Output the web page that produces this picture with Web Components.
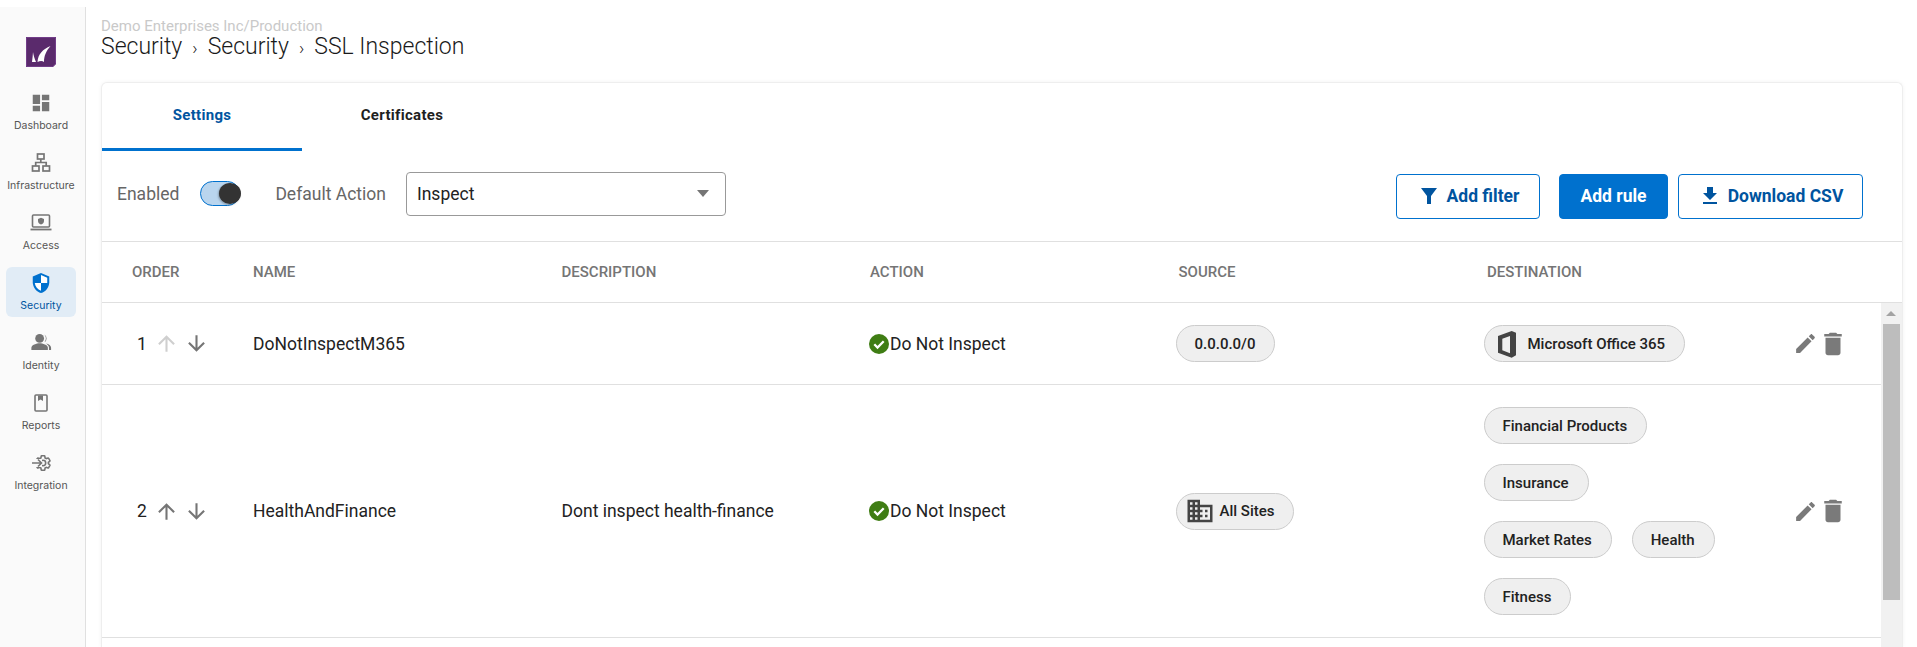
<!DOCTYPE html>
<html>
<head>
<meta charset="utf-8">
<title>SSL Inspection</title>
<style>
  html, body { margin: 0; height: 647px; overflow: hidden; background: #fff; }
  body { font-family: Roboto, "Liberation Sans", sans-serif; color: #222; }
  #app { display: flex; height: 647px; }
  svg { display: block; }
</style>
</head>
<body>
<div id="app">
  <side-nav>
    <nav-item label="Dashboard">
      <svg width="22" height="22" viewBox="0 0 24 24" fill="#757575"><path d="M3 13h8V3H3v10zm0 8h8v-6H3v6zm10 0h8V11h-8v10zm0-18v6h8V3h-8z"/></svg>
    </nav-item>
    <nav-item label="Infrastructure">
      <svg width="22" height="22" viewBox="0 0 22 22" fill="none" stroke="#757575" stroke-width="1.7"><rect x="7.500" y="2" width="6.500" height="5"/><rect x="2.500" y="14" width="6.500" height="5"/><rect x="13" y="14" width="6.500" height="5"/><path d="M10.800 7v3.500M5.700 14v-3.500h10.500V14"/></svg>
    </nav-item>
    <nav-item label="Access">
      <svg width="24" height="22" viewBox="0 0 24 22" fill="none"><rect x="3.500" y="3" width="17" height="12" rx="1" stroke="#757575" stroke-width="1.600"/><path d="M1.500 17.500h21" stroke="#757575" stroke-width="1.800"/><path d="M12 5.800l3 1.100v2.200c0 1.700-1.300 2.900-3 3.400-1.700-.5-3-1.700-3-3.400V6.900z" fill="#757575"/></svg>
    </nav-item>
    <nav-item label="Security" active>
      <svg width="22" height="22" viewBox="0 0 24 24"><path d="M12 1L3 4.800v6.400c0 5.400 3.800 10.400 9 11.800 5.200-1.400 9-6.400 9-11.800V4.800z" fill="#0071ce"/><path d="M12 3.400V12h6.800V6.200zM12 12H5.200c.5 3.900 3.100 7.300 6.800 8.500z" fill="#fff"/></svg>
    </nav-item>
    <nav-item label="Identity">
      <svg width="22" height="22" viewBox="0 0 24 24" fill="#757575"><circle cx="10.500" cy="7" r="4.800"/><path d="M1.500 19.500v-2.200c0-3.300 5.800-5 9-5s9 1.700 9 5v2.200z"/><path d="M15.800 2.800a5 5 0 0 1 0 8.400 7 7 0 0 0 0-8.400zM17.500 12.600c3 .5 5.500 2.200 5.500 4.700v2.200h-2.300v-2.200c0-1.900-1.200-3.500-3.200-4.700z"/></svg>
    </nav-item>
    <nav-item label="Reports">
      <svg width="22" height="22" viewBox="0 0 22 22" fill="none"><rect x="5" y="3" width="12" height="16" rx="1" stroke="#757575" stroke-width="1.600"/><path d="M8 3.500h5V9l-2.500-1.500L8 9z" fill="#757575"/></svg>
    </nav-item>
    <nav-item label="Integration">
      <svg width="26" height="22" viewBox="0 0 26 22" fill="none" stroke="#757575">
        <path transform="translate(6 2) scale(.75)" stroke-width="2.100" d="M19.140 12.940c.04-.3.06-.61.06-.94 0-.32-.02-.64-.07-.94l2.030-1.580c.18-.14.23-.41.12-.61l-1.920-3.320c-.12-.22-.37-.29-.59-.22l-2.390.96c-.5-.38-1.030-.7-1.620-.94l-.36-2.540c-.04-.24-.24-.41-.48-.41h-3.840c-.24 0-.43.17-.47.41l-.36 2.540c-.59.24-1.130.57-1.620.94l-2.390-.96c-.22-.08-.47 0-.59.22L2.740 8.870c-.12.21-.08.47.12.61l2.030 1.580c-.05.3-.09.63-.09.94s.02.64.07.94l-2.030 1.580c-.18.14-.23.41-.12.61l1.920 3.320c.12.22.37.29.59.22l2.390-.96c.5.38 1.030.7 1.620.94l.36 2.540c.05.24.24.41.48.41h3.840c.24 0 .44-.17.47-.41l.36-2.540c.59-.24 1.130-.56 1.620-.94l2.390.96c.22.08.47 0 .59-.22l1.920-3.320c.12-.22.07-.47-.12-.61l-2.010-1.580zM12 15.600c-1.980 0-3.600-1.620-3.600-3.600s1.620-3.600 3.600-3.600 3.600 1.620 3.600 3.600-1.620 3.600-3.600 3.600z"/>
        <rect x="5" y="7" width="9" height="8" fill="#fafafa" stroke="none"/>
        <path stroke-width="1.600" d="M4 11h9.500M10 7.500l3.500 3.500-3.500 3.500"/>
      </svg>
    </nav-item>
  </side-nav>

  <main-area>
    <page-title org="Demo Enterprises Inc/Production">
      <span>Security</span><span>Security</span><span>SSL Inspection</span>
    </page-title>
    <content-card>
      <tab-bar></tab-bar>
      <rules-toolbar></rules-toolbar>
      <rules-table>
        <rule-row order="1" name="DoNotInspectM365" action="Do Not Inspect" first>
          <tag-chip slot="source">0.0.0.0/0</tag-chip>
          <chip-line slot="destination"><tag-chip kind="office">Microsoft Office 365</tag-chip></chip-line>
        </rule-row>
        <rule-row order="2" name="HealthAndFinance" description="Dont inspect health-finance" action="Do Not Inspect">
          <tag-chip slot="source" kind="sites">All Sites</tag-chip>
          <chip-line slot="destination"><tag-chip>Financial Products</tag-chip></chip-line>
          <chip-line slot="destination"><tag-chip>Insurance</tag-chip></chip-line>
          <chip-line slot="destination"><tag-chip>Market Rates</tag-chip><tag-chip>Health</tag-chip></chip-line>
          <chip-line slot="destination"><tag-chip>Fitness</tag-chip></chip-line>
        </rule-row>
      </rules-table>
    </content-card>
  </main-area>
</div>

<script>
  function define(name, css, html, setup) {
    customElements.define(
      name,
      class extends HTMLElement {
        connectedCallback() {
          if (this.shadowRoot) return;
          this.attachShadow({ mode: "open" });
          this.shadowRoot.innerHTML = `<style>svg{display:block}${css}</style>${
            typeof html === "function" ? html(this) : html
          }`;
          if (setup) setup(this);
        }
      }
    );
  }

  define(
    "side-nav",
    `:host { display: flex; flex-direction: column; align-items: flex-start; box-sizing: border-box;
        width: 86px; flex: none; height: 640px; margin-top: 7px; padding-left: 6px; background: #fafafa;
        border-right: 1px solid #e0e0e0; }
     .logo { margin: 30px 0 20px 20px; width: 30px; height: 30px; }`,
    `<svg class="logo" viewBox="0 0 30 30">
       <path d="M0 0h30v27l-3 3H0z" fill="#5a2a6c"/>
       <path d="M.5.500h29v26.300l-2.700 2.700H.5z" fill="none" stroke="#713c88"/>
       <path d="M24.500 9C17 12 12 17 11.500 25c2.500-1.500 5-1.500 6.500 0 0-6 2-11 6.500-16zM7 15c-.2 3-.5 6.500-1 10h4C8.500 22 7.500 18 7 15z" fill="#fff"/>
     </svg><slot></slot>`
  );

  define(
    "nav-item",
    `:host { display: flex; flex-direction: column; align-items: center; box-sizing: border-box;
        width: 70px; height: 50px; margin-bottom: 10px; padding-top: 5px; border-radius: 6px;
        font: 10.5px Inter, Roboto, sans-serif; color: #555; }
     :host([active]) { background: #e1ecf6; color: #00549f; }
     .icon { height: 22px; display: flex; align-items: center; justify-content: center; }
     .label { margin-top: 5px; line-height: 14px; white-space: nowrap; }`,
    (el) => `<div class="icon"><slot></slot></div><div class="label">${el.getAttribute("label")}</div>`
  );

  define(
    "main-area",
    `:host { display: flex; flex-direction: column; flex: 1; min-width: 0; min-height: 0; box-sizing: border-box;
        padding: 18px 14px 0 15px; }`,
    `<slot></slot>`
  );

  define(
    "page-title",
    `:host { display: block; margin-bottom: 21px; }
     .org { font-size: 15px; line-height: 16px; color: #c9c9c9; }
     .crumbs { display: flex; font-size: 23px; font-weight: 300; line-height: 26px; color: #1a1a1a; }
     ::slotted(span:not(:last-child))::after { content: "\\203A"; margin: 0 10px; font-size: 18px; }`,
    (el) => `<div class="org">${el.getAttribute("org")}</div><div class="crumbs"><slot></slot></div>`
  );

  define(
    "content-card",
    `:host { display: block; flex: 1; min-height: 0; overflow: hidden; border: 1px solid #eee; border-bottom: 0;
        border-radius: 6px 6px 0 0; box-shadow: 0 0 4px rgba(0,0,0,.05); background: #fff; }`,
    `<slot></slot>`
  );

  define(
    "tab-bar",
    `:host { display: flex; height: 68px; }
     .tab { box-sizing: border-box; width: 200px; padding-top: 23px; text-align: center;
        font-size: 15px; font-weight: 700; line-height: 18px; letter-spacing: .3px; color: #1f1f1f; }
     .on { color: #00549f; border-bottom: 3px solid #0071ce; }`,
    `<div class="tab on">Settings</div><div class="tab">Certificates</div>`
  );

  define(
    "switch-toggle",
    `:host { display: block; position: relative; box-sizing: border-box; width: 40px; height: 25px;
        border: 1.5px solid #0071ce; border-radius: 13px; background: #b9d5ee; }
     .knob { position: absolute; top: .5px; right: -1.5px; width: 22px; height: 21px; border-radius: 50%;
        background: #333; box-shadow: -1px 1px 2px rgba(0,0,0,.25); }`,
    `<div class="knob"></div>`
  );

  define(
    "action-button",
    `:host { display: flex; align-items: center; justify-content: center; gap: 6px; box-sizing: border-box;
        height: 45px; border: 1px solid #0071ce; border-radius: 4px; background: #fff;
        font-size: 17.5px; font-weight: 700; color: #00549f; }
     :host([primary]) { background: #0071ce; color: #fff; }`,
    `<slot name="icon"></slot><slot></slot>`
  );

  define(
    "rules-toolbar",
    `:host { display: flex; align-items: center; height: 90px; padding: 0 39px 0 15px; }
     .left { display: flex; align-items: center; padding-bottom: 5px; font-size: 17.5px; color: #666; }
     switch-toggle { margin: 0 35px 0 21px; }
     .select { display: flex; align-items: center; justify-content: space-between; box-sizing: border-box;
        width: 320px; height: 44px; margin-left: 20px; padding: 0 16px 0 10px; border: 1px solid #999;
        border-radius: 4px; color: #222; }
     .caret { width: 0; height: 0; border: 6.500px solid transparent; border-top: 7px solid #757575; border-bottom: 0; }
     .right { display: flex; margin-left: auto; }
     .filter { width: 144px; margin-right: 19px; }
     .rule { width: 109px; margin-right: 10px; }
     .csv { width: 185px; }`,
    `<div class="left">
       <span>Enabled</span><switch-toggle></switch-toggle><span>Default Action</span>
       <div class="select"><span>Inspect</span><span class="caret"></span></div>
     </div>
     <div class="right">
       <action-button class="filter"><svg slot="icon" width="24" height="24" viewBox="0 0 24 24" fill="#00549f"><path d="M4 4h16l-6 8v8h-4v-8z"/></svg>Add filter</action-button>
       <action-button class="rule" primary>Add rule</action-button>
       <action-button class="csv"><svg slot="icon" width="24" height="24" viewBox="0 0 24 24" fill="#00549f"><path d="M19 9h-4V3H9v6H5l7 7 7-7zM5 18v2h14v-2H5z"/></svg>Download CSV</action-button>
     </div>`
  );

  define(
    "rules-table",
    `:host { display: block; border-top: 1px solid #e0e0e0; }
     .head { display: grid; grid-template-columns: 151px repeat(5, 308.5px) 1fr; align-items: center;
        height: 60px; border-bottom: 1px solid #e0e0e0; font-size: 15px; font-weight: 500; color: #757575; }
     .head span:first-child { padding-left: 30px; }
     .body { display: flex; height: 344px; }
     .rows { flex: 1; min-width: 0; }
     .scroll { position: relative; width: 21px; flex: none; background: #f1f1f1; }
     .up { position: absolute; top: 8px; left: 5px; width: 0; height: 0; border: 5px solid transparent;
        border-bottom: 5px solid #a3a3a3; border-top: 0; }
     .thumb { position: absolute; top: 21px; left: 2px; width: 17px; height: 276px; background: #bdbdbd; }`,
    `<div class="head"><span>ORDER</span><span>NAME</span><span>DESCRIPTION</span><span>ACTION</span><span>SOURCE</span><span>DESTINATION</span><span></span></div>
     <div class="body"><div class="rows"><slot></slot></div>
       <div class="scroll"><div class="up"></div><div class="thumb"></div></div></div>`
  );

  define(
    "rule-row",
    `:host { display: grid; grid-template-columns: 151px repeat(2, 308.5px) 305.5px 308px 309px 1fr; align-items: center;
        padding: 22px 0; border-bottom: 1px solid #e0e0e0; font-size: 17.5px; color: #222; }
     .order { display: flex; align-items: center; padding-left: 35px; }
     .num { width: 19px; }
     .arrows { display: flex; gap: 5px; margin-left: -2px; }
     .action { display: flex; align-items: center; margin-left: -3px; }
     .action span { margin-left: -1px; }
     .source { display: flex; }
     .dest { display: flex; flex-direction: column; align-items: flex-start; row-gap: 20px; }
     .tools { display: flex; align-items: center; }`,
    (el) => {
      const up = el.hasAttribute("first") ? "#cfcfcf" : "#757575";
      return `<div class="order"><span class="num">${el.getAttribute("order")}</span>
        <div class="arrows">
          <svg width="25" height="25" viewBox="0 0 24 24" fill="${up}"><path d="M4 12l1.410 1.410L11 7.830V20h2V7.830l5.580 5.590L20 12l-8-8-8 8z"/></svg>
          <svg width="25" height="25" viewBox="0 0 24 24" fill="#757575"><path d="M20 12l-1.410-1.410L13 16.170V4h-2v12.170l-5.580-5.590L4 12l8 8 8-8z"/></svg>
        </div></div>
        <div>${el.getAttribute("name")}</div>
        <div>${el.getAttribute("description") || ""}</div>
        <div class="action">
          <svg width="24" height="24" viewBox="0 0 24 24"><circle cx="12" cy="12" r="10" fill="#3f7d14"/><path d="M7.300 12.300l3.200 3.200 6.200-6.200" fill="none" stroke="#fff" stroke-width="2.300"/></svg>
          <span>${el.getAttribute("action")}</span>
        </div>
        <div class="source"><slot name="source"></slot></div>
        <div class="dest"><slot name="destination"></slot></div>
        <div class="tools">
          <svg width="25" height="25" viewBox="0 0 24 24" fill="#7a7a7a"><path d="M3 17.250V21h3.750L17.810 9.940l-3.750-3.750L3 17.250zM20.710 7.040c.39-.39.39-1.020 0-1.410l-2.340-2.340c-.39-.39-1.020-.39-1.410 0l-1.830 1.830 3.750 3.750 1.830-1.830z"/></svg>
          <svg width="30" height="30" viewBox="0 0 24 24" fill="#7a7a7a"><path d="M6 19c0 1.100.9 2 2 2h8c1.100 0 2-.9 2-2V7H6v12zM19 4h-3.500l-1-1h-5l-1 1H5v2h14V4z"/></svg>
        </div>`;
    }
  );

  define("chip-line", `:host { display: flex; gap: 20px; }`, `<slot></slot>`);

  const chipIcons = {
    office: `<svg class="ic office" width="20" height="28" viewBox="7 4 20 28" fill="#444"><path fill-rule="evenodd" d="M8 10L21.700 5 26 6.700v22.600l-4.300 2.400L8 26.700zM12.300 12.700L20 10v17.300l-7.700-3z"/></svg>`,
    sites: `<svg class="ic" width="30" height="30" viewBox="0 0 24 24" fill="#444"><path d="M12 7V3H2v18h20V7H12zM6 19H4v-2h2v2zm0-4H4v-2h2v2zm0-4H4V9h2v2zm0-4H4V5h2v2zm4 12H8v-2h2v2zm0-4H8v-2h2v2zm0-4H8V9h2v2zm0-4H8V5h2v2zm10 12h-8v-2h2v-2h-2v-2h2v-2h-2V9h8v10zm-2-8h-2v2h2v-2zm0 4h-2v2h2v-2z"/></svg>`,
  };

  define(
    "tag-chip",
    `:host { display: inline-flex; align-items: center; box-sizing: border-box; height: 37px; padding: 0 19px 0 18px;
        border: 1px solid #ccc; border-radius: 19px; background: #efefef; font-size: 15px; font-weight: 500;
        color: #222; white-space: nowrap; }
     :host([kind="sites"]) { padding-left: 8px; }
     :host([kind="office"]) { padding-left: 12px; }
     .ic { margin-right: 5px; }
     .office { margin-right: 11px; }`,
    (el) => `${chipIcons[el.getAttribute("kind")] || ""}<slot></slot>`
  );
</script>
</body>
</html>
